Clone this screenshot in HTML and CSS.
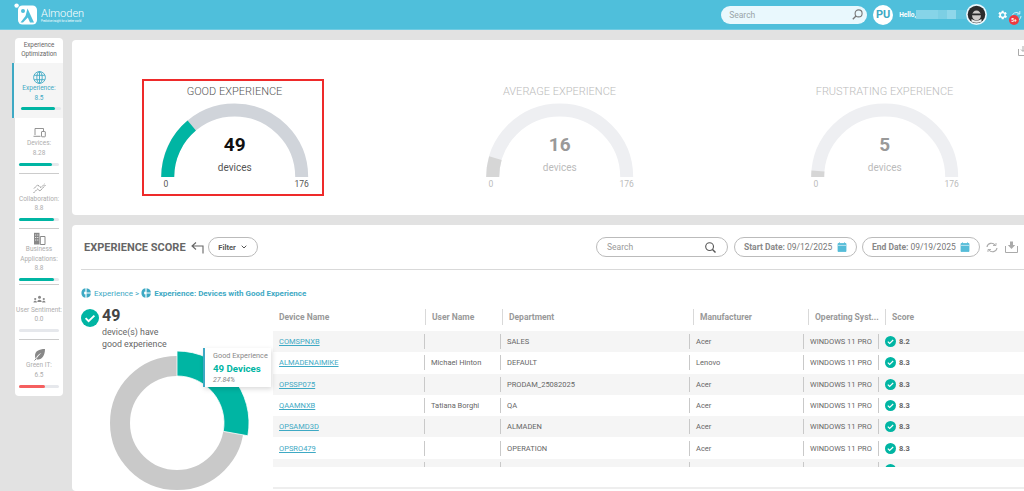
FILE: index.html
```html
<!DOCTYPE html>
<html lang="en">
<head>
    <meta charset="UTF-8">
    <meta name="viewport" content="width=device-width, initial-scale=1.0">
    <title>Experience Score</title>
    <link rel="stylesheet" href="styles.css">
</head>
<body>
<svg class="defs" width="0" height="0">
    <symbol id="check" viewBox="0 0 18 18">
        <circle cx="9" cy="9" r="9" fill="#00b5a3"/>
        <path d="M4.6 9.2l3 3 5.8-5.6" fill="none" stroke="#fff" stroke-width="1.9"/>
    </symbol>
    <symbol id="pie" viewBox="0 0 12 12">
        <path d="M5.3 0.2A5.9 5.9 0 0 0 5.3 11.8V7.6H3.8V4.4H5.3Z" fill="#3ea9c4"/>
        <path d="M6.7 0.2A5.9 5.9 0 0 1 11.9 5.3H6.7Z" fill="#3ea9c4"/>
        <path d="M6.7 6.7H11.9A5.9 5.9 0 0 1 6.7 11.8Z" fill="#3ea9c4"/>
    </symbol>
    <symbol id="calendar" viewBox="0 0 10 10">
        <path d="M1 1.5h8v8H1zM2.5.3v2M7.5.3v2" fill="#55bcd8" stroke="#55bcd8" stroke-width=".8"/>
        <path d="M1 3.4h8" stroke="#fff" stroke-width=".6"/>
    </symbol>
</svg>

<header class="topbar">
    <div class="brand">
        <svg class="brand-logo" width="23" height="22" viewBox="0 0 23 22">
            <circle cx="2.6" cy="2.6" r="2.2" fill="#fff"/>
            <rect x="4" y="2.5" width="19" height="19" rx="4.5" fill="#fff"/>
            <circle cx="9" cy="8" r="2" fill="#4fbfdb"/>
            <path d="M13.5 5.500l6.500 14h-4l-2.200-5-4.800 5H6.500l5-6.500z" fill="#4fbfdb"/>
        </svg>
        <div class="brand-text">
            <span class="brand-name">Almoden</span>
            <span class="brand-tag">Predictive insight for a better world</span>
        </div>
    </div>
    <div class="topbar-right">
        <div class="top-search">
            <span>Search</span>
            <svg width="11" height="11" viewBox="0 0 11 11"><circle cx="6.6" cy="4.4" r="3.5" fill="none" stroke="#777" stroke-width="1.1"/><path d="M4 7L.8 10.2" stroke="#777" stroke-width="1.3"/></svg>
        </div>
        <div class="initials">PU</div>
        <span class="hello">Hello,</span>
        <div class="name-blur"></div>
        <svg class="avatar" width="21" height="21" viewBox="0 0 21 21">
            <circle cx="10.500" cy="10.500" r="10.500" fill="#e9f8fd"/>
            <circle cx="10.500" cy="10.500" r="8.800" fill="#2b2b2b"/>
            <ellipse cx="10.500" cy="11.500" rx="4.400" ry="5" fill="#cfcbc8"/>
            <path d="M6 9.500h9v1.800H6z" fill="#2b2b2b"/>
            <path d="M5.500 15q5 3.500 10 0v2.500q-5 2.500-10 0z" fill="#eee"/>
        </svg>
        <svg class="gear" width="12" height="12" viewBox="0 0 24 24"><path fill="#fff" fill-rule="evenodd" d="M19.400 13a7.500 7.500 0 0 0 0-2l2.100-1.600-2-3.500-2.500 1a7.500 7.500 0 0 0-1.700-1L15.400 3.300h-4l-.4 2.600a7.500 7.500 0 0 0-1.700 1l-2.500-1-2 3.500L6.900 11a7.500 7.500 0 0 0 0 2l-2.100 1.600 2 3.500 2.500-1a7.500 7.500 0 0 0 1.700 1l.4 2.600h4l.4-2.600a7.500 7.500 0 0 0 1.700-1l2.500 1 2-3.500zM13.400 15.500a3.500 3.500 0 1 1 0-7 3.500 3.500 0 0 1 0 7z"/></svg>
        <div class="alerts">
            <svg width="11" height="13" viewBox="0 0 11 13"><path d="M1 7a4.500 4.500 0 0 1 7.500-3.400M10 6a4.500 4.500 0 0 1-7.500 3.400" fill="none" stroke="#d8f2f9" stroke-width=".9"/><path d="M8.800 1v3H6" fill="none" stroke="#d8f2f9" stroke-width=".9"/></svg>
            <span class="badge">5+</span>
        </div>
    </div>
</header>

<div class="page">
    <nav class="sidebar">
        <div class="side-title">Experience Optimization</div>

        <div class="side-item active">
            <svg width="13" height="13" viewBox="0 0 13 13" fill="none" stroke="#3ea9c4" stroke-width=".9"><circle cx="6.500" cy="6.500" r="5.900"/><ellipse cx="6.500" cy="6.500" rx="2.700" ry="5.900"/><path d="M1.200 4.300h10.600M1.200 8.700h10.600M6.500.6v11.800"/></svg>
            <span>Experience:</span>
            <span>8.5</span>
            <div class="bar"><div class="bar-fill" style="width: 85%"></div></div>
        </div>

        <div class="side-item">
            <svg width="13" height="13" viewBox="0 0 13 13" fill="none" stroke="#888" stroke-width=".9"><path d="M2 9V2.500h8.500V5M.5 10.300h7"/><rect x="8.500" y="5.500" width="3.800" height="5.300" rx=".5"/></svg>
            <span>Devices:</span>
            <span>8.28</span>
            <div class="bar"><div class="bar-fill" style="width: 82%"></div></div>
        </div>

        <div class="side-item">
            <svg width="13" height="13" viewBox="0 0 13 13" fill="none" stroke="#888" stroke-width=".9" stroke-dasharray="2 .6"><path d="M.5 11l4-4 2.500 2L12.500 3M1 6.500L4.500 3 8 5.500 11.500 2"/></svg>
            <span>Collaboration:</span>
            <span>8.8</span>
            <div class="bar"><div class="bar-fill" style="width: 88%"></div></div>
        </div>

        <div class="side-item tall">
            <svg width="13" height="13" viewBox="0 0 13 13"><path d="M1 .8h5.500v11.700H1z" fill="#888"/><path d="M7.300 4.500h4.700v8H7.300z" fill="none" stroke="#888"/><path d="M2.200 2.500h1v1h-1zM4.300 2.500h1v1h-1zM2.200 5h1v1h-1zM4.300 5h1v1h-1zM2.200 7.500h1v1h-1zM4.300 7.500h1v1h-1z" fill="#fff"/></svg>
            <span>Business</span>
            <span>Applications:</span>
            <span>8.8</span>
            <div class="bar"><div class="bar-fill" style="width: 88%"></div></div>
        </div>

        <div class="side-item">
            <svg width="13" height="13" viewBox="0 0 13 13" fill="#888"><circle cx="6.500" cy="4.300" r="1.500"/><path d="M4.300 9c0-3 4.400-3 4.400 0z"/><circle cx="2.200" cy="6" r="1.100"/><path d="M.5 9.500c0-2.300 3.400-2.300 3.400 0z"/><circle cx="10.800" cy="6" r="1.100"/><path d="M9.100 9.500c0-2.300 3.400-2.300 3.400 0z"/></svg>
            <span>User Sentiment:</span>
            <span>0.0</span>
            <div class="bar"></div>
        </div>

        <div class="side-item">
            <svg width="13" height="13" viewBox="0 0 13 13"><path d="M12 1C6 1 2 3 2 8c0 1 .3 2 .8 2.700C4 7.500 6 6 8.500 5 6.500 6.500 4.500 8.500 3.500 11.300 8.500 12.500 12 8 12 1z" fill="#888"/><path d="M1.500 12.500l2-2" stroke="#888"/></svg>
            <span>Green IT:</span>
            <span>6.5</span>
            <div class="bar"><div class="bar-fill low" style="width: 65%"></div></div>
        </div>
    </nav>

    <main class="content">
        <section class="card gauges">
            <svg class="export" width="10" height="10" viewBox="0 0 10 10" fill="none" stroke="#aaa"><path d="M.5 3v6.500H9M5 0v5M3 3.500l2 2 2-2"/></svg>

            <div class="gauge selected">
                <h3>GOOD EXPERIENCE</h3>
                <svg width="178" height="92" viewBox="0 0 178 92">
                    <path class="track" d="M23.700 77A67 67 0 0 1 157.700 77"/>
                    <path class="value" d="M23.700 77A67 67 0 0 1 47.740 25.600"/>
                    <text class="count" x="90.700" y="51">49</text>
                    <text class="unit" x="90.700" y="71">devices</text>
                    <text class="scale" x="22" y="87">0</text>
                    <text class="scale" x="157.700" y="87">176</text>
                </svg>
            </div>

            <div class="gauge muted">
                <h3>AVERAGE EXPERIENCE</h3>
                <svg width="178" height="92" viewBox="0 0 178 92">
                    <path class="track" d="M23.700 77A67 67 0 0 1 157.700 77"/>
                    <path class="value" d="M23.700 77A67 67 0 0 1 26.400 58.100"/>
                    <text class="count" x="90.700" y="51">16</text>
                    <text class="unit" x="90.700" y="71">devices</text>
                    <text class="scale" x="22" y="87">0</text>
                    <text class="scale" x="157.700" y="87">176</text>
                </svg>
            </div>

            <div class="gauge muted">
                <h3>FRUSTRATING EXPERIENCE</h3>
                <svg width="178" height="92" viewBox="0 0 178 92">
                    <path class="track" d="M23.700 77A67 67 0 0 1 157.700 77"/>
                    <path class="value" d="M23.700 77A67 67 0 0 1 23.960 71.030"/>
                    <text class="count" x="90.700" y="51">5</text>
                    <text class="unit" x="90.700" y="71">devices</text>
                    <text class="scale" x="22" y="87">0</text>
                    <text class="scale" x="157.700" y="87">176</text>
                </svg>
            </div>
        </section>

        <section class="card details">
            <div class="toolbar">
                <h2>EXPERIENCE SCORE</h2>
                <svg class="back" width="13" height="13" viewBox="0 0 13 13" fill="none" stroke="#666" stroke-width="1.100"><path d="M5 1.500L1 5l4 3.500M1 5h11v7.500"/></svg>
                <button class="pill filter">Filter <svg width="6" height="4" viewBox="0 0 6 4" fill="none" stroke="#555"><path d="M.7.700L3 3l2.300-2.300"/></svg></button>
                <div class="toolbar-right">
                    <div class="pill search">
                        <span>Search</span>
                        <svg width="11" height="11" viewBox="0 0 11 11" fill="none" stroke="#555" stroke-width="1.100"><circle cx="4.600" cy="4.600" r="3.900"/><path d="M7.500 7.500l3 3" stroke-width="1.400"/></svg>
                    </div>
                    <div class="pill date date-start">
                        <span><b>Start Date:</b> 09/12/2025</span>
                        <svg width="10" height="10"><use href="#calendar"/></svg>
                    </div>
                    <div class="pill date date-end">
                        <span><b>End Date:</b> 09/19/2025</span>
                        <svg width="10" height="10"><use href="#calendar"/></svg>
                    </div>
                    <svg class="refresh" width="12" height="11" viewBox="0 0 12 11" fill="none" stroke="#aaa" stroke-width="1.100"><path d="M1 5a4.500 4.500 0 0 1 8-2M11 6a4.500 4.500 0 0 1-8 2"/><path d="M7 3.500h3V1M5 7.500H2V10" stroke-width=".9"/></svg>
                    <svg class="download" width="13" height="12" viewBox="0 0 13 12"><path d="M.5 5v6.500h12V5" fill="none" stroke="#aaa"/><path d="M5 .5h3v3.500h2.200L6.500 8 2.800 4H5z" fill="#aaa"/></svg>
                </div>
            </div>

            <div class="crumbs">
                <svg width="10" height="10"><use href="#pie"/></svg>
                <span class="crumb">Experience &gt;</span>
                <svg width="10" height="10"><use href="#pie"/></svg>
                <span class="crumb current">Experience: Devices with Good Experience</span>
            </div>

            <div class="split">
                <div class="overview">
                    <div class="summary">
                        <svg width="18" height="18"><use href="#check"/></svg>
                        <div>
                            <div class="summary-count">49</div>
                            <div class="summary-text">device(s) have<br>good experience</div>
                        </div>
                    </div>
                    <svg class="donut" width="150" height="150" viewBox="-75 -75 150 150">
                        <circle r="57" fill="none" stroke="#c9c9c9" stroke-width="20"/>
                        <path d="M0-72A72 72 0 0 1 70.860 12.750L46.260 8.320A47 47 0 0 0 0-47Z" fill="#00b5a3" stroke="#fff" stroke-width=".8"/>
                    </svg>
                    <div class="tip">
                        <div class="tip-label">Good Experience</div>
                        <div class="tip-value">49 Devices</div>
                        <div class="tip-pct">27.84%</div>
                    </div>
                </div>

                <div class="list">
                    <div class="list-head">
                        <div>Device Name</div>
                        <div>User Name</div>
                        <div>Department</div>
                        <div>Manufacturer</div>
                        <div>Operating Syst...</div>
                        <div>Score</div>
                    </div>
                    <div class="list-body">
                        <div class="row">
                            <div><a href="#">COMSPNXB</a></div><div></div><div>SALES</div><div>Acer</div><div>WINDOWS 11 PRO</div>
                            <div class="score"><svg width="11" height="11"><use href="#check"/></svg><b>8.2</b></div>
                        </div>
                        <div class="row">
                            <div><a href="#">ALMADENAIMIKE</a></div><div>Michael Hinton</div><div>DEFAULT</div><div>Lenovo</div><div>WINDOWS 11 PRO</div>
                            <div class="score"><svg width="11" height="11"><use href="#check"/></svg><b>8.3</b></div>
                        </div>
                        <div class="row">
                            <div><a href="#">OPSSP075</a></div><div></div><div>PRODAM_25082025</div><div>Acer</div><div>WINDOWS 11 PRO</div>
                            <div class="score"><svg width="11" height="11"><use href="#check"/></svg><b>8.3</b></div>
                        </div>
                        <div class="row">
                            <div><a href="#">QAAMNXB</a></div><div>Tatiana Borghi</div><div>QA</div><div>Acer</div><div>WINDOWS 11 PRO</div>
                            <div class="score"><svg width="11" height="11"><use href="#check"/></svg><b>8.3</b></div>
                        </div>
                        <div class="row">
                            <div><a href="#">OPSAMD3D</a></div><div></div><div>ALMADEN</div><div>Acer</div><div>WINDOWS 11 PRO</div>
                            <div class="score"><svg width="11" height="11"><use href="#check"/></svg><b>8.3</b></div>
                        </div>
                        <div class="row">
                            <div><a href="#">OPSRO479</a></div><div></div><div>OPERATION</div><div>Acer</div><div>WINDOWS 11 PRO</div>
                            <div class="score"><svg width="11" height="11"><use href="#check"/></svg><b>8.3</b></div>
                        </div>
                        <div class="row">
                            <div><a href="#">OPS0P067</a></div><div></div><div>OPERATION</div><div>Dell</div><div>WINDOWS 11 PRO</div>
                            <div class="score"><svg width="11" height="11"><use href="#check"/></svg><b>8.4</b></div>
                        </div>
                    </div>
                </div>
            </div>
        </section>
    </main>
</div>
</body>
</html>
```

FILE: styles.css
```css
:root {
    --brand-blue: #4fbfdb;
    --link-blue: #3ea9c4;
    --teal: #00b5a3;
    --page-bg: #e2e2e2;
    --text-dark: #444;
    --text-mid: #666;
    --text-soft: #999;
    --line: #d9d9d9;
}

* {
    box-sizing: border-box;
}

html, body {
    height: 491px;
    overflow: hidden;
}

body {
    margin: 0;
    background-color: var(--page-bg);
    font-family: Roboto, "Liberation Sans", sans-serif;
    color: var(--text-mid);
}

.defs {
    position: absolute;
}

/* top bar */
.topbar {
    height: 30px;
    background-color: var(--brand-blue);
    border-bottom: 1px solid #72cbe2;
    display: flex;
    align-items: center;
    justify-content: space-between;
    padding-left: 14px;
}

.brand {
    display: flex;
    align-items: center;
    gap: 4px;
    margin-top: -1px;
}

.brand-text {
    display: flex;
    flex-direction: column;
    color: #fff;
    padding-top: 4px;
}

.brand-name {
    font-size: 11px;
    font-weight: 300;
    line-height: 12px;
}

.brand-tag {
    font-size: 2.6px;
    line-height: 4px;
    white-space: nowrap;
}

.topbar-right {
    display: flex;
    align-items: center;
    height: 100%;
}

.top-search {
    width: 146px;
    height: 18px;
    margin-right: 6px;
    padding: 0 4px 0 8px;
    border-radius: 9px;
    background-color: #e9f8fd;
    display: flex;
    align-items: center;
    justify-content: space-between;
    font-size: 8.5px;
    color: #9aa5a9;
}

.initials {
    width: 20px;
    height: 20px;
    border-radius: 50%;
    background-color: #fff;
    color: var(--link-blue);
    font-size: 11px;
    font-weight: 700;
    line-height: 20px;
    text-align: center;
}

.hello {
    margin-left: 6px;
    font-size: 6.5px;
    font-weight: 700;
    color: #fff;
}

.name-blur {
    width: 50px;
    height: 9px;
    background: linear-gradient(90deg, #86d4e8 0 45%, #7ccfe4 45% 62%, #8fd7ea 62% 80%, #63c6de 80%);
}

.gear {
    margin-left: 9px;
}

.alerts {
    position: relative;
    width: 11px;
    height: 13px;
    margin-left: 3px;
    margin-right: 2px;
}

.badge {
    position: absolute;
    left: -2px;
    top: 7px;
    width: 10px;
    height: 10px;
    border-radius: 50%;
    background-color: #ee3a3f;
    color: #fff;
    font-size: 5px;
    font-weight: 700;
    line-height: 10px;
    text-align: center;
}

/* page */
.page {
    display: flex;
    align-items: flex-start;
}

.sidebar {
    width: 48px;
    margin: 8px 9px 0 15px;
    background-color: #fff;
    border-radius: 4px;
    flex-shrink: 0;
    padding-top: 3px;
}

.side-title {
    height: 22px;
    font-size: 6.3px;
    line-height: 9px;
    text-align: center;
    color: #666;
}

.side-item {
    position: relative;
    height: 55.6px;
    padding-top: 8px;
    display: flex;
    flex-direction: column;
    align-items: center;
    font-size: 6.5px;
    line-height: 9.5px;
    color: #adadad;
    white-space: nowrap;
}

.side-item svg {
    flex-shrink: 0;
}

.side-item + .side-item::before {
    content: "";
    position: absolute;
    left: 4px;
    right: 4px;
    top: -1px;
    height: 1px;
    background-color: #ccc;
}

.side-item.active {
    height: 55px;
    margin-left: -3px;
    border-left: 2px solid var(--link-blue);
    padding-left: 1px;
    background-color: #f5f5f5;
    color: var(--link-blue);
}

.side-item.active + .side-item::before {
    display: none;
}

.side-item.tall {
    padding-top: 3px;
}

.bar {
    position: absolute;
    left: 4px;
    bottom: 8px;
    width: 40px;
    height: 3px;
    border-radius: 2px;
    background-color: #e6e8ec;
}

.side-item.tall .bar {
    bottom: 4px;
}

.side-item.active .bar {
    left: 7px;
}

.bar-fill {
    height: 100%;
    border-radius: 2px;
    background-color: var(--teal);
}

.bar-fill.low {
    background-color: #f55f5f;
}

.content {
    flex: 1;
    min-width: 0;
    margin-top: 10px;
}

.card {
    position: relative;
    background-color: #fff;
    border-radius: 4px 0 0 4px;
}

/* gauges */
.gauges {
    height: 175px;
    padding-top: 39px;
    display: grid;
    grid-template-columns: repeat(3, 325px);
    margin-bottom: 10px;
}

.export {
    position: absolute;
    right: -4px;
    top: 6px;
}

.gauge {
    width: 182px;
    height: 117px;
    margin-left: 70px;
    border: 2px solid transparent;
}

.gauge.selected {
    border-color: #ee2a2a;
}

.gauge h3 {
    margin: 0;
    height: 19px;
    font-size: 11px;
    font-weight: 300;
    line-height: 21px;
    text-align: center;
    padding-left: 3px;
    white-space: nowrap;
    color: #555;
}

.gauge svg {
    display: block;
}

.gauge .track, .gauge .value {
    fill: none;
    stroke-width: 13;
}

.gauge .track {
    stroke: #d0d4da;
}

.gauge .value {
    stroke: var(--teal);
}

.gauge text {
    text-anchor: middle;
    font-family: Roboto, "Liberation Sans", sans-serif;
}

.gauge .count {
    font-size: 19px;
    font-weight: 700;
    fill: #111;
}

.gauge .unit {
    font-size: 10px;
    fill: #555;
}

.gauge .scale {
    font-size: 8.5px;
    fill: #555;
}

.gauge.muted h3 {
    color: #bbb;
}

.gauge.muted .track {
    stroke: #eeeff2;
}

.gauge.muted .value {
    stroke: #d6d6d6;
}

.gauge.muted .count {
    fill: #999;
}

.gauge.muted .unit, .gauge.muted .scale {
    fill: #bbb;
}

/* details */
.details {
    height: 266px;
    padding: 12px 0 0 9px;
}

.toolbar {
    display: flex;
    align-items: center;
    height: 33px;
    padding: 0 0 12px 3px;
    border-bottom: 1px solid var(--line);
}

.toolbar h2 {
    margin: 0;
    font-size: 11px;
    font-weight: 700;
    color: var(--text-mid);
    white-space: nowrap;
}

.back {
    margin-left: 5px;
}

.pill {
    height: 20px;
    border: 1px solid #bbb;
    border-radius: 10px;
    background-color: #fff;
    font-family: inherit;
    font-size: 8.5px;
    color: #777;
    display: flex;
    align-items: center;
}

.filter {
    width: 50px;
    margin-left: 4px;
    justify-content: center;
    gap: 5px;
    font-weight: 700;
    font-size: 7.5px;
    padding: 0;
    color: #555;
}

.toolbar-right {
    margin-left: auto;
    display: flex;
    align-items: center;
}

.search {
    width: 132px;
    padding: 0 11px 0 10px;
    justify-content: space-between;
    color: #999;
    margin-right: 6px;
}

.date {
    justify-content: space-between;
    white-space: nowrap;
}

.date b {
    font-weight: 700;
    color: #888;
}

.date-start {
    width: 123px;
    padding: 0 9px 0 9px;
    margin-right: 5px;
}

.date-end {
    width: 118px;
    padding: 0 9px 0 9px;
}

.refresh {
    margin-left: 6px;
}

.download {
    margin: 0 6px 0 7px;
}

.crumbs {
    display: flex;
    align-items: center;
    height: 14px;
    margin-top: 16px;
    font-size: 8px;
    color: var(--link-blue);
    white-space: nowrap;
}

.crumb {
    margin: 0 2px 0 3px;
}

.crumb.current {
    font-weight: 700;
}

.split {
    display: flex;
    margin-top: 8px;
}

.overview {
    position: relative;
    width: 192px;
    flex-shrink: 0;
}

.summary {
    display: flex;
    gap: 3px;
    height: 40px;
    padding-top: 1px;
}

.summary-count {
    margin-top: -1px;
    font-size: 16px;
    font-weight: 700;
    line-height: 16px;
    color: var(--text-dark);
}

.summary-text {
    margin-top: 2px;
    font-size: 8.8px;
    line-height: 12px;
    color: var(--text-mid);
}

.donut {
    display: block;
    margin-left: 21px;
}

.tip {
    position: absolute;
    left: 122px;
    top: 40px;
    width: 68px;
    height: 39px;
    padding: 3px 0 0 8px;
    background-color: #fff;
    border-left: 2px solid var(--link-blue);
    box-shadow: 1px 2px 5px rgba(0, 0, 0, .15);
    white-space: nowrap;
}

.tip-label {
    font-size: 7.3px;
    line-height: 10px;
    color: #888;
}

.tip-value {
    font-size: 9.7px;
    font-weight: 700;
    line-height: 15px;
    color: var(--teal);
}

.tip-pct {
    font-size: 7px;
    font-style: italic;
    line-height: 9px;
    color: #888;
}

/* device list */
.list {
    flex: 1;
    min-width: 0;
    height: 181px;
    border-bottom: 2px solid #eee;
}

.list-head, .row {
    display: grid;
    align-items: center;
}

.list-head {
    grid-template-columns: 152px 77px 191px 115px 77px 1fr;
    height: 23px;
    padding-bottom: 5px;
    font-size: 8.5px;
    font-weight: 700;
    color: var(--text-soft);
}

.list-head > div {
    height: 16px;
    line-height: 16px;
    padding-left: 6px;
    white-space: nowrap;
}

.list-head > div + div {
    border-left: 1px solid var(--line);
}

.list-body {
    height: 136px;
    overflow: hidden;
}

.row {
    grid-template-columns: 151px 76px 189px 114px 75px 1fr;
    height: 21.3px;
    font-size: 7.5px;
    color: var(--text-mid);
}

.row:nth-child(odd) {
    background-color: #f5f5f5;
}

.row > div {
    height: 15px;
    line-height: 15px;
    padding-left: 6px;
    white-space: nowrap;
}

.row > div + div {
    border-left: 1px solid #c9c9c9;
}

.row a {
    color: var(--link-blue);
}

.row .score {
    display: flex;
    align-items: center;
    gap: 3px;
}

.score b {
    color: var(--text-mid);
}
```
